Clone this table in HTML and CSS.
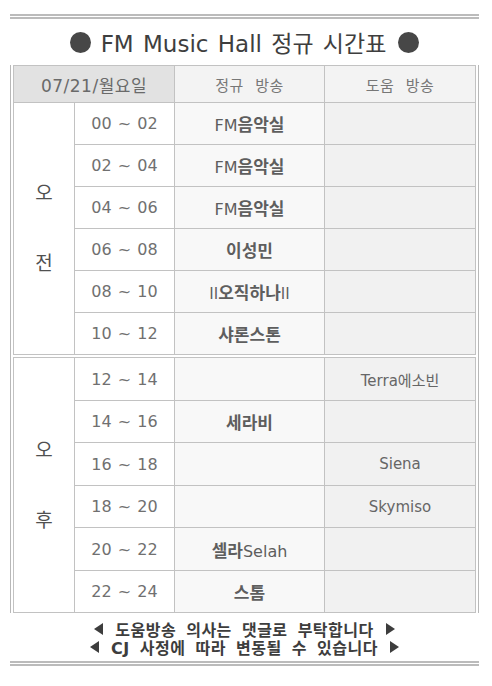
FILE: index.html
```html
<!DOCTYPE html>
<html lang="ko">
<head>
<meta charset="utf-8">
<title>FM Music Hall 정규 시간표</title>
<link rel="stylesheet" href="styles.css">
</head>
<body>
<div class="page">
  <h1 class="title"><span class="dot"></span><span class="title-text">FM Music Hall 정규 시간표</span><span class="dot"></span></h1>
  <div class="frame">
    <table class="sched am">
      <colgroup><col class="c1"><col class="c2"><col class="c3"><col class="c4"></colgroup>
      <thead>
        <tr class="head"><th colspan="2" class="date">07/21/월요일</th><th>정규 방송</th><th>도움 방송</th></tr>
      </thead>
      <tbody>
        <tr><td rowspan="6" class="half half-am">오<br><br>전</td><td class="time">00 ~ 02</td><td class="main"><span class="en">FM</span>음악실</td><td class="help"></td></tr>
        <tr><td class="time">02 ~ 04</td><td class="main"><span class="en">FM</span>음악실</td><td class="help"></td></tr>
        <tr><td class="time">04 ~ 06</td><td class="main"><span class="en">FM</span>음악실</td><td class="help"></td></tr>
        <tr><td class="time">06 ~ 08</td><td class="main">이성민</td><td class="help"></td></tr>
        <tr><td class="time">08 ~ 10</td><td class="main"><span class="en">ll</span>오직하나<span class="en">ll</span></td><td class="help"></td></tr>
        <tr><td class="time">10 ~ 12</td><td class="main">샤론스톤</td><td class="help"></td></tr>
      </tbody>
    </table>
    <table class="sched pm">
      <colgroup><col class="c1"><col class="c2"><col class="c3"><col class="c4"></colgroup>
      <tbody>
        <tr><td rowspan="6" class="half">오<br><br>후</td><td class="time">12 ~ 14</td><td class="main"></td><td class="help">Terra에소빈</td></tr>
        <tr><td class="time">14 ~ 16</td><td class="main">세라비</td><td class="help"></td></tr>
        <tr><td class="time">16 ~ 18</td><td class="main"></td><td class="help">Siena</td></tr>
        <tr><td class="time">18 ~ 20</td><td class="main"></td><td class="help">Skymiso</td></tr>
        <tr><td class="time">20 ~ 22</td><td class="main">셀라<span class="en">Selah</span></td><td class="help"></td></tr>
        <tr><td class="time">22 ~ 24</td><td class="main">스톰</td><td class="help"></td></tr>
      </tbody>
    </table>
  </div>
  <div class="notice">
    <p class="notice-line"><span class="tri tri-l"></span><span>도움방송 의사는 댓글로 부탁합니다</span><span class="tri tri-r"></span></p>
    <p class="notice-line"><span class="tri tri-l"></span><span>CJ 사정에 따라 변동될 수 있습니다</span><span class="tri tri-r"></span></p>
  </div>
</div>
</body>
</html>
```
FILE: styles.css
```css
* { box-sizing: border-box; }
html, body { margin: 0; padding: 0; background: #fff; }
body {
  font-family: "DejaVu Sans", "Noto Sans CJK KR", sans-serif;
  color: #555;
}
.page {
  width: 469px;
  margin-left: 10px;
  padding-top: 14px;
}
.title {
  margin: 0;
  height: 51px;
  border-top: 5px double #bbb;
  display: flex;
  align-items: center;
  justify-content: center;
  font-size: 23px;
  font-weight: normal;
  color: #3e3e3e;
  white-space: pre;
}
.title-text { margin: 0 12px 0 10px; word-spacing: 2px; }
.dot {
  width: 21px;
  height: 21px;
  border-radius: 50%;
  background: #474747;
}
.frame {
  border-left: 1px solid #b8b8b8;
  border-right: 1px solid #b8b8b8;
  padding: 0 2px;
}
.sched {
  width: 463px;
  table-layout: fixed;
  border-collapse: separate;
  border-spacing: 0;
  border-top: 1px solid #c2c2c2;
  border-left: 1px solid #c2c2c2;
}
.pm { margin-top: 2px; }
.c1 { width: 61px; }
.c2 { width: 100px; }
.c3 { width: 150px; }
.c4 { width: 151px; }
.sched th, .sched td {
  padding: 0;
  border-right: 1px solid #c2c2c2;
  border-bottom: 1px solid #c2c2c2;
  text-align: center;
  vertical-align: middle;
}
.head { height: 37px; }
.sched th {
  font-weight: normal;
  font-size: 15px;
  color: #777;
  background: #f3f3f3;
  word-spacing: 6px;
  letter-spacing: 0.5px;
}
.sched th.date {
  background: #e2e2e2;
  font-size: 17px;
  color: #6a6a6a;
  word-spacing: 0;
  letter-spacing: 0.5px;
}
.sched tbody tr { height: 42px; }
.pm tbody tr:nth-child(odd) { height: 43px; }
.half {
  background: #fff;
  font-size: 19px;
  line-height: 35px;
  color: #505050;
}
.half-am { padding-top: 6px; }
.time {
  background: #fff;
  font-size: 16px;
  color: #707070;
  word-spacing: 1px;
}
.main {
  background: #f8f8f8;
  font-size: 17px;
  font-weight: bold;
  color: #5e5e5e;
}
.main .en { font-weight: normal; font-size: 16px; }
.help {
  background: #f1f1f1;
  font-size: 15px;
  color: #666;
}
.notice {
  padding: 7px 0 5px;
  border-bottom: 5px double #bbb;
}
.notice-line {
  margin: 0;
  height: 18px;
  display: flex;
  align-items: center;
  justify-content: center;
  font-size: 16px;
  font-weight: bold;
  color: #3d3d3d;
  word-spacing: 4px;
  letter-spacing: 0.5px;
}
.tri {
  width: 0;
  height: 0;
  border-top: 6px solid transparent;
  border-bottom: 6px solid transparent;
}
.tri-l { border-right: 9px solid #3d3d3d; margin-right: 12px; }
.tri-r { border-left: 9px solid #3d3d3d; margin-left: 12px; }
```
